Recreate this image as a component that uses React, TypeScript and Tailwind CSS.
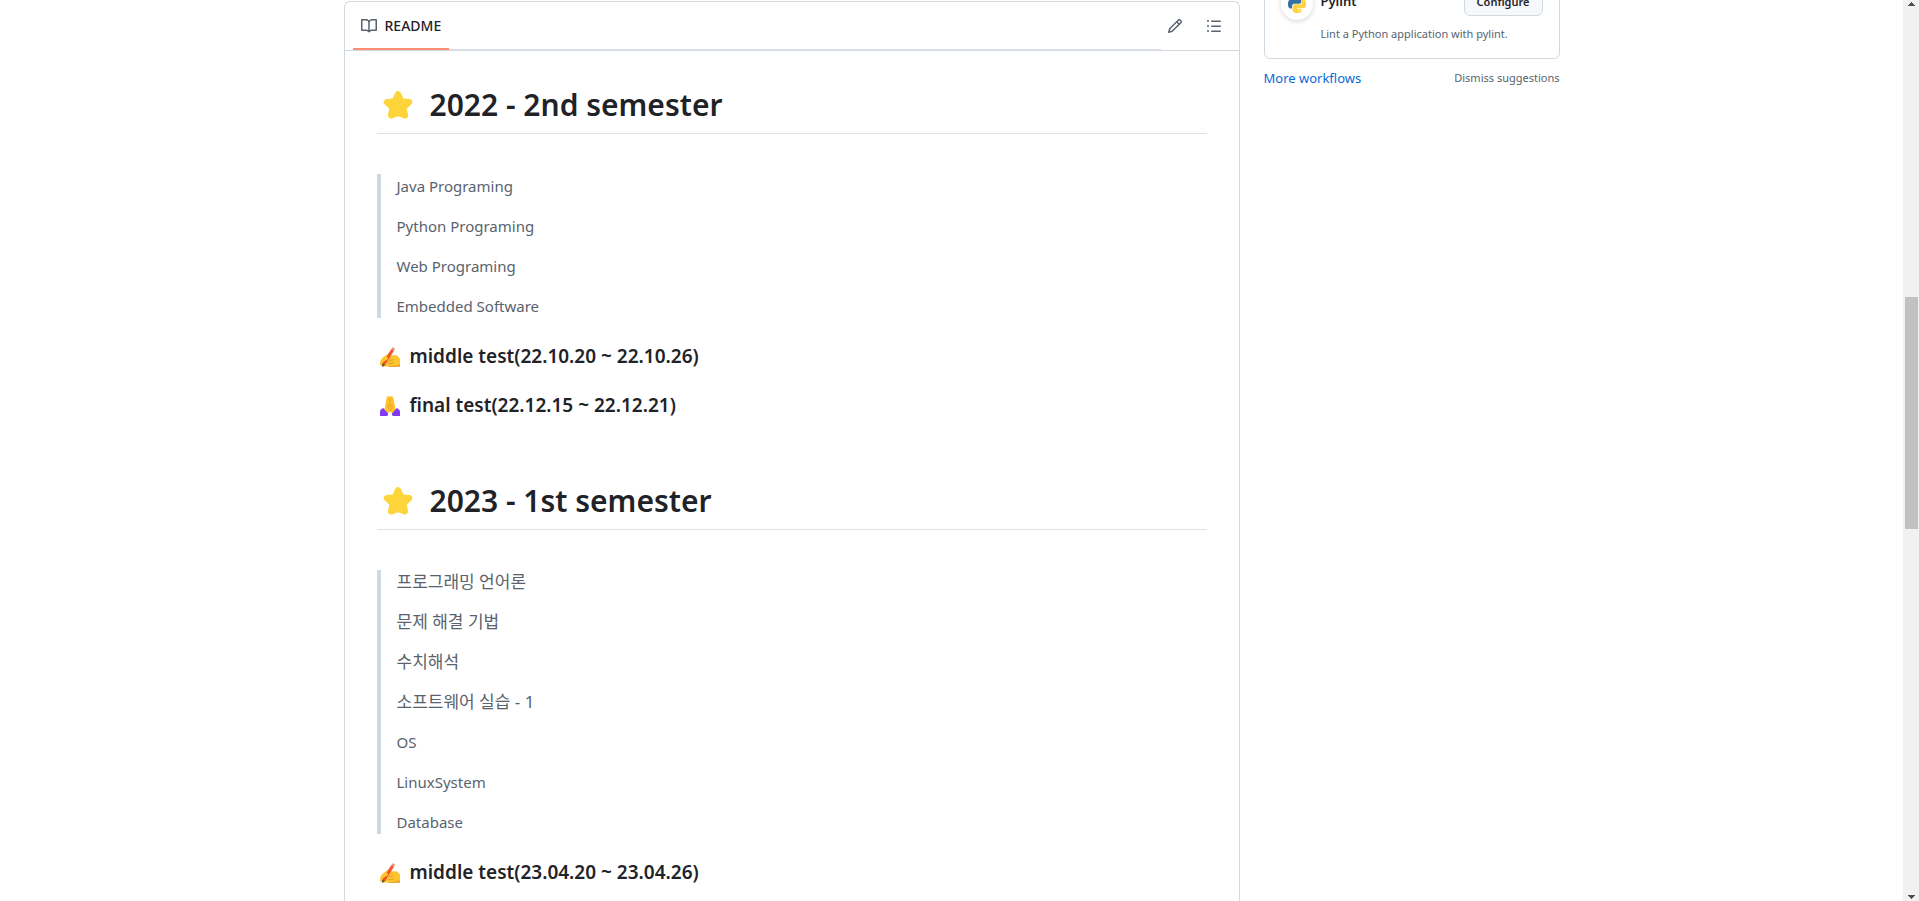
import React from "react";

function Icon({ path, className = "" }: { path: string; className?: string }) {
  return (
    <svg viewBox="0 0 16 16" fill="currentColor" className={`h-4 w-4 shrink-0 ${className}`} aria-hidden="true">
      <path d={path} />
    </svg>
  );
}

const bookPath =
  "M0 1.75A.75.75 0 0 1 .75 1h4.253c1.227 0 2.317.59 3 1.501A3.743 3.743 0 0 1 11.006 1h4.245a.75.75 0 0 1 .75.75v10.5a.75.75 0 0 1-.75.75h-4.507a2.25 2.25 0 0 0-1.591.659l-.622.621a.75.75 0 0 1-1.06 0l-.622-.621A2.25 2.25 0 0 0 5.258 13H.75a.75.75 0 0 1-.75-.75Zm7.251 10.324.004-5.073-.002-2.253A2.25 2.25 0 0 0 5.003 2.5H1.5v9h3.757a3.75 3.75 0 0 1 1.994.574ZM8.755 4.75l-.004 7.322a3.752 3.752 0 0 1 1.992-.572H14.5v-9h-3.495a2.25 2.25 0 0 0-2.25 2.25Z";
const pencilPath =
  "M11.013 1.427a1.75 1.75 0 0 1 2.474 0l1.086 1.086a1.75 1.75 0 0 1 0 2.474l-8.61 8.61c-.21.21-.47.364-.756.445l-3.251.93a.75.75 0 0 1-.927-.928l.929-3.25c.081-.286.235-.547.445-.758l8.61-8.61Zm.176 4.823L9.75 4.81l-6.286 6.287a.253.253 0 0 0-.064.108l-.558 1.953 1.953-.558a.253.253 0 0 0 .108-.064Zm1.238-3.763a.25.25 0 0 0-.354 0L10.811 3.75l1.439 1.44 1.263-1.263a.25.25 0 0 0 0-.354Z";
const listPath =
  "M5.75 2.5h8.5a.75.75 0 0 1 0 1.5h-8.5a.75.75 0 0 1 0-1.5Zm0 5h8.5a.75.75 0 0 1 0 1.5h-8.5a.75.75 0 0 1 0-1.5Zm0 5h8.5a.75.75 0 0 1 0 1.5h-8.5a.75.75 0 0 1 0-1.5ZM2 14a1 1 0 1 1 0-2 1 1 0 0 1 0 2Zm1-6a1 1 0 1 1-2 0 1 1 0 0 1 2 0ZM2 4a1 1 0 1 1 0-2 1 1 0 0 1 0 2Z";

function StarEmoji() {
  return (
    <svg viewBox="0 0 32 32" className="h-8 w-8 shrink-0" aria-hidden="true">
      <path
        d="M16 4.6 19.2 12 27.6 12.8 21.4 18.6 23.2 26.6 16 23.6 8.8 26.6 10.6 18.6 4.4 12.8 12.8 12Z"
        fill="#fdd53b"
        stroke="#fdd53b"
        strokeWidth="7"
        strokeLinejoin="round"
        transform="translate(.9 1.1) scale(.945)"
      />
    </svg>
  );
}

function WritingEmoji() {
  return (
    <svg viewBox="0 0 20 20" className="h-5 w-5 shrink-0" aria-hidden="true">
      <path d="M0 17C0 12.5 3 9.8 6 8.2L9.5 5.8C10.8 5 12 6.2 11.2 7.3L10.6 8.3H15.5C17.2 8.3 18.2 9.3 18.8 10.6L20 11.5V19.5H6.5C3.5 19.5 0 19.5 0 17Z" fill="#fcc42d" />
      <path d="M9 13.2C10.6 14 12.5 13.4 13.6 12.3M8 16.2C10 17 12.5 16.6 14 15.4M17 18.8 20 17.8V20H8.5C12 20 14.5 19.6 17 18.8Z" fill="none" stroke="#e89b2a" strokeWidth="1" />
      <path d="M11.2 2.2 14 3.6 5.2 18 2.4 16.6Z" fill="#f4512c" />
      <path d="M11.2 2.2 12 .9C12.7-.2 15.4 1 14.8 2.3L14 3.6Z" fill="#f78a72" />
      <path d="M2.4 16.6 5.2 18 2.2 20Z" fill="#5b4037" />
      <path d="M4.5 10.2C6.3 9.2 8.2 9.9 8 11.4 7.9 12.8 5.2 13.6 3.4 14.6 2.2 15.2 1.6 14.2 2 13Z" fill="#fcc42d" />
    </svg>
  );
}

function PrayEmoji() {
  return (
    <svg viewBox="0 0 20 20" className="h-5 w-5 shrink-0" aria-hidden="true">
      <path d="M9.9 .8C9-.3 7 .2 6.7 1.6L5.4 8.2 4.8 12 3.2 14.3 6.7 18.2 10 15.4 13.3 18.2 16.8 14.3 15.2 12 14.6 8.2 13.3 1.6C13 .2 10.9-.3 9.9 .8Z" fill="#fcc42d" />
      <path d="M10 2V11.5M8 8V12L10 14.8 12 12V8" fill="none" stroke="#e89b2a" strokeWidth=".8" />
      <path d="M3.4 12.2 8 17.4C8.3 18.4 7.9 19.4 7 20H0V15.5C.4 13.6 2 12 3.4 12.2Z" fill="#8039f5" />
      <path d="M16.6 12.2 12 17.4C11.7 18.4 12.1 19.4 13 20H20V15.5C19.6 13.6 18 12 16.6 12.2Z" fill="#8039f5" />
    </svg>
  );
}

function PythonLogo() {
  return (
    <svg viewBox="0 0 24 24" className="h-[18px] w-[18px]" aria-hidden="true">
      <path
        fill="#3670a0"
        d="M14.25.18l.9.2.73.26.59.3.45.32.34.34.25.34.16.33.1.3.04.26.02.2-.01.13V8.5l-.05.63-.13.55-.21.46-.26.38-.3.31-.33.25-.35.19-.35.14-.33.1-.3.07-.26.04-.21.02H8.77l-.69.05-.59.14-.5.22-.41.27-.33.32-.27.35-.2.36-.15.37-.1.35-.07.32-.04.27-.02.21v3.06H3.17l-.21-.03-.28-.07-.32-.12-.35-.18-.36-.26-.36-.36-.35-.46-.32-.59-.28-.73-.21-.88-.14-1.05-.05-1.23.06-1.22.16-1.04.24-.87.32-.71.36-.57.4-.44.42-.33.42-.24.4-.16.36-.1.32-.05.24-.01h.16l.06.01h8.16v-.83H6.18l-.01-2.75-.02-.37.05-.34.11-.31.17-.28.25-.26.31-.23.38-.2.44-.18.51-.15.58-.12.64-.1.71-.06.77-.04.84-.02 1.27.05z"
      />
      <path
        fill="#ffd343"
        d="M21.04 6.11l.28.06.32.12.35.18.36.27.36.35.35.47.32.59.28.73.21.88.14 1.04.05 1.23-.06 1.23-.16 1.04-.24.86-.32.71-.36.57-.4.45-.42.33-.42.24-.4.16-.36.09-.32.05-.24.02-.16-.01h-8.22v.82h5.84l.01 2.76.02.36-.05.34-.11.31-.17.29-.25.25-.31.24-.38.2-.44.17-.51.15-.58.13-.64.09-.71.07-.77.04-.84.01-1.27-.04-1.07-.14-.9-.2-.73-.25-.59-.3-.45-.33-.34-.34-.25-.34-.16-.33-.1-.3-.04-.25-.02-.2.01-.13v-5.34l.05-.64.13-.54.21-.46.26-.38.3-.32.33-.24.35-.2.35-.14.33-.1.3-.06.26-.04.21-.02.13-.01h5.84l.69-.05.59-.14.5-.21.41-.28.33-.32.27-.35.2-.36.15-.36.1-.35.07-.32.04-.28.02-.21V6.07h2.09z"
      />
      <circle cx="8.7" cy="2.9" r="1" fill="#fff" />
      <circle cx="15.1" cy="21.1" r="1" fill="#fff" />
    </svg>
  );
}

type Course = { name: string; korean?: boolean };
type Test = { kind: "middle" | "final"; label: string };
type Semester = { title: string; courses: Course[]; tests: Test[] };

const semesters: Semester[] = [
  {
    title: "2022 - 2nd semester",
    courses: [
      { name: "Java Programing" },
      { name: "Python Programing" },
      { name: "Web Programing" },
      { name: "Embedded Software" },
    ],
    tests: [
      { kind: "middle", label: "middle test(22.10.20 ~ 22.10.26)" },
      { kind: "final", label: "final test(22.12.15 ~ 22.12.21)" },
    ],
  },
  {
    title: "2023 - 1st semester",
    courses: [
      { name: "프로그래밍 언어론", korean: true },
      { name: "문제 해결 기법", korean: true },
      { name: "수치해석", korean: true },
      { name: "소프트웨어 실습 - 1", korean: true },
      { name: "OS" },
      { name: "LinuxSystem" },
      { name: "Database" },
    ],
    tests: [{ kind: "middle", label: "middle test(23.04.20 ~ 23.04.26)" }],
  },
];

function SemesterSection({ title, courses, tests }: Semester) {
  return (
    <section>
      <h1 className="flex items-center gap-4 border-b border-[#dfe2e6] pt-[2px] pb-2 pl-[5px] text-[30px] leading-10 font-semibold">
        <StarEmoji />
        {title}
      </h1>
      <blockquote className="mt-10 flex flex-col gap-4 border-l-4 border-[#d1d9e0] pl-4 text-[15px] leading-6 text-[#59636e]">
        {courses.map((course) => (
          <p key={course.name} lang={course.korean ? "ko" : undefined} className={course.korean ? "text-[17px] leading-6" : ""}>
            {course.name}
          </p>
        ))}
      </blockquote>
      {tests.map((test) => (
        <h3 key={test.label} className="mt-7 flex items-center gap-[10px] pl-[3px] text-[19px] leading-[21px] font-semibold">
          {test.kind === "middle" ? <WritingEmoji /> : <PrayEmoji />}
          {test.label}
        </h3>
      ))}
    </section>
  );
}

function Readme() {
  return (
    <main className="mt-px min-w-0 flex-1 rounded-t-md border border-b-0 border-[#d1d9e0]">
      <div className="flex h-[49px] items-stretch border-b border-[#d1d9e0] pl-2">
        <nav className="flex flex-1 border-b border-[#dfe2e6]">
          <a href="#readme" className="-mb-px flex items-center gap-2 border-b-2 border-[#fd8c73] px-2 pt-px text-[14px] font-medium">
            <Icon path={bookPath} className="text-[#59636e]" />
            README
          </a>
        </nav>
        <div className="flex items-center gap-[11px] pr-[11px] text-[#59636e]">
          <button type="button" aria-label="Edit file" className="flex h-7 w-7 items-center justify-center">
            <Icon path={pencilPath} />
          </button>
          <button type="button" aria-label="Outline" className="flex h-7 w-7 items-center justify-center">
            <Icon path={listPath} />
          </button>
        </div>
      </div>
      <article id="readme" className="flex flex-col gap-[63px] p-8">
        {semesters.map((semester) => (
          <SemesterSection key={semester.title} {...semester} />
        ))}
      </article>
    </main>
  );
}

function Workflows() {
  return (
    <aside className="-mt-8 w-[296px] shrink-0">
      <div className="rounded-md border border-[#d1d9e0] px-4 pt-[19px] pb-[15px]">
        <div className="flex gap-2">
          <span className="flex h-8 w-8 shrink-0 items-center justify-center rounded-full bg-white shadow-[0_1px_5px_rgba(31,35,40,0.2)]">
            <PythonLogo />
          </span>
          <div className="min-w-0 flex-1">
            <div className="flex h-7 items-center justify-between">
              <h4 className="text-[13px] font-semibold">Pylint</h4>
              <button type="button" className="h-7 rounded-md border border-[#d1d9e0] bg-[#f6f8fa] px-3 text-[11px] font-semibold">
                Configure
              </button>
            </div>
            <p className="mt-[9px] text-[11px] leading-[18px] text-[#59636e]">Lint a Python application with pylint.</p>
          </div>
        </div>
      </div>
      <div className="mt-[7px] flex items-center justify-between leading-6">
        <a href="#workflows" className="text-[13px] text-[#0969da]">
          More workflows
        </a>
        <button type="button" className="text-[11px] text-[#59636e]">
          Dismiss suggestions
        </button>
      </div>
    </aside>
  );
}

function ScrollTrack() {
  return (
    <div className="flex w-4 shrink-0 flex-col items-center bg-[#f1f1f1] py-[2px]" aria-hidden="true">
      <svg viewBox="0 0 7 4" className="h-1 w-[7px]" shapeRendering="crispEdges">
        <path d="M3 0h1v1h1v1h1v1h1v1H0V3h1V2h1V1h1z" fill="#505050" />
      </svg>
      <div className="flex w-full flex-1 flex-col items-center py-3">
        <div className="basis-[279px]" />
        <div className="w-[13px] basis-[232px] bg-[#c1c1c1]" />
      </div>
      <svg viewBox="0 0 7 4" className="h-1 w-[7px]" shapeRendering="crispEdges">
        <path d="M3 4h1V3h1V2h1V1h1V0H0v1h1v1h1v1h1z" fill="#505050" />
      </svg>
    </div>
  );
}

export default function App() {
  return (
    <div className="flex h-screen overflow-hidden bg-white font-['Noto_Sans','Noto_Sans_CJK_KR',sans-serif] text-[#1f2328]">
      <div className="flex min-w-0 flex-1 justify-center">
        <div className="flex w-full max-w-[1216px] gap-6">
          <Readme />
          <Workflows />
        </div>
      </div>
      <ScrollTrack />
    </div>
  );
}
